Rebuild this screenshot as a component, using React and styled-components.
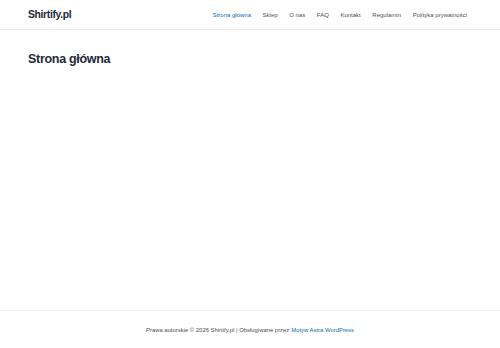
import React from "react";
import styled, { createGlobalStyle } from "styled-components";

const GlobalStyle = createGlobalStyle`
  html, body {
    margin: 0;
    padding: 0;
    background: #ffffff;
  }
  body {
    font-family: "Liberation Sans", Arial, sans-serif;
    color: #4b4f58;
  }
`;

const colors = {
  text: "#4b4f58",
  heading: "#1e293b",
  link: "#0170b9",
  border: "#ececec"
};

const Page = styled.div`
  min-height: 348px;
  display: flex;
  flex-direction: column;
`;

const Header = styled.header`
  height: 29px;
  border-bottom: 1px solid ${colors.border};
  display: flex;
  align-items: center;
  justify-content: space-between;
  padding: 0 33px 0 28px;
`;

const Logo = styled.a`
  font-size: 10.4px;
  font-weight: 700;
  letter-spacing: -0.35px;
  color: ${colors.heading};
  text-decoration: none;
`;

const Nav = styled.nav`
  display: flex;
  gap: 11.6px;
`;

const NavItem = styled.a`
  font-size: 6px;
  color: ${(p) => (p.$active ? colors.link : colors.text)};
  text-decoration: none;
`;

const Main = styled.main`
  flex: 1;
  padding: 22px 28px 0;
`;

const Title = styled.h1`
  margin: 0;
  font-size: 12.5px;
  font-weight: 700;
  letter-spacing: -0.3px;
  color: ${colors.heading};
`;

const Footer = styled.footer`
  height: 37px;
  border-top: 1px solid ${colors.border};
  display: flex;
  align-items: center;
  justify-content: center;
  font-size: 5.9px;
  color: ${colors.text};
`;

const FooterLink = styled.a`
  color: ${colors.link};
  text-decoration: none;
  margin-left: 2px;
`;

const items = [
  "Strona główna",
  "Sklep",
  "O nas",
  "FAQ",
  "Kontakt",
  "Regulamin",
  "Polityka prywatności"
];

export default function App() {
  return (
    <Page>
      <GlobalStyle />
      <Header>
        <Logo href="#">Shirtify.pl</Logo>
        <Nav>
          {items.map((item, i) => (
            <NavItem key={item} href="#" $active={i === 0}>
              {item}
            </NavItem>
          ))}
        </Nav>
      </Header>
      <Main>
        <Title>Strona główna</Title>
      </Main>
      <Footer>
        Prawa autorskie © 2026 Shirtify.pl | Obsługiwane przez
        <FooterLink href="#">Motyw Astra WordPress</FooterLink>
      </Footer>
    </Page>
  );
}
